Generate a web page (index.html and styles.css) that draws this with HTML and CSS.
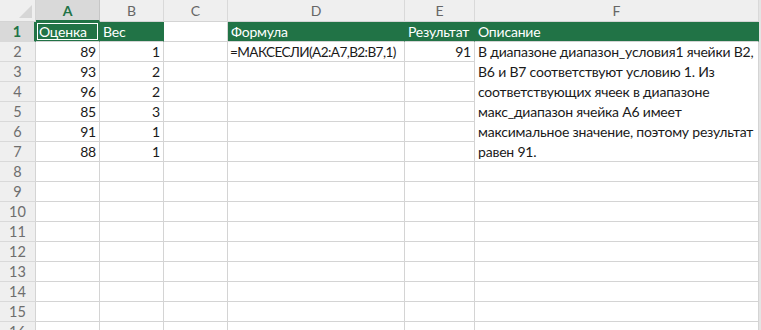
FILE: index.html
```html
<!DOCTYPE html>
<html>
<head>
<meta charset="utf-8">
<link rel="stylesheet" href="styles.css">
</head>
<body>
<div class="sheet">
  <div class="corner"><span class="tri"></span></div>
  <div class="ch sel-ch">A</div>
  <div class="ch">B</div>
  <div class="ch">C</div>
  <div class="ch">D</div>
  <div class="ch">E</div>
  <div class="ch">F</div>
  <div class="edge"></div>

  <div class="rh sel-rh">1</div>
  <div class="c g sel">Оценка</div>
  <div class="c g">Вес</div>
  <div class="c"></div>
  <div class="c g">Формула</div>
  <div class="c g">Результат</div>
  <div class="c g">Описание</div>
  <div class="edge"></div>

  <div class="rh">2</div>
  <div class="c num">89</div>
  <div class="c num">1</div>
  <div class="c"></div>
  <div class="c formula">=МАКСЕСЛИ(A2:A7,B2:B7,1)</div>
  <div class="c num">91</div>
  <div class="c merge">В диапазоне диапазон_условия1 ячейки B2,<br>B6 и B7 соответствуют условию 1. Из<br>соответствующих ячеек в диапазоне<br>макс_диапазон ячейка A6 имеет<br>максимальное значение, поэтому результат<br>равен 91.</div>
  <div class="edge"></div>

  <div class="rh">3</div>
  <div class="c num">93</div>
  <div class="c num">2</div>
  <div class="c"></div><div class="c"></div><div class="c"></div>
  <div class="edge"></div>

  <div class="rh">4</div>
  <div class="c num">96</div>
  <div class="c num">2</div>
  <div class="c"></div><div class="c"></div><div class="c"></div>
  <div class="edge"></div>

  <div class="rh">5</div>
  <div class="c num">85</div>
  <div class="c num">3</div>
  <div class="c"></div><div class="c"></div><div class="c"></div>
  <div class="edge"></div>

  <div class="rh">6</div>
  <div class="c num">91</div>
  <div class="c num">1</div>
  <div class="c"></div><div class="c"></div><div class="c"></div>
  <div class="edge"></div>

  <div class="rh">7</div>
  <div class="c num">88</div>
  <div class="c num">1</div>
  <div class="c"></div><div class="c"></div><div class="c"></div>
  <div class="edge"></div>

  <div class="rh">8</div>
  <div class="c"></div><div class="c"></div><div class="c"></div><div class="c"></div><div class="c"></div><div class="c"></div>
  <div class="edge"></div>
  <div class="rh">9</div>
  <div class="c"></div><div class="c"></div><div class="c"></div><div class="c"></div><div class="c"></div><div class="c"></div>
  <div class="edge"></div>
  <div class="rh">10</div>
  <div class="c"></div><div class="c"></div><div class="c"></div><div class="c"></div><div class="c"></div><div class="c"></div>
  <div class="edge"></div>
  <div class="rh">11</div>
  <div class="c"></div><div class="c"></div><div class="c"></div><div class="c"></div><div class="c"></div><div class="c"></div>
  <div class="edge"></div>
  <div class="rh">12</div>
  <div class="c"></div><div class="c"></div><div class="c"></div><div class="c"></div><div class="c"></div><div class="c"></div>
  <div class="edge"></div>
  <div class="rh">13</div>
  <div class="c"></div><div class="c"></div><div class="c"></div><div class="c"></div><div class="c"></div><div class="c"></div>
  <div class="edge"></div>
  <div class="rh">14</div>
  <div class="c"></div><div class="c"></div><div class="c"></div><div class="c"></div><div class="c"></div><div class="c"></div>
  <div class="edge"></div>
  <div class="rh">15</div>
  <div class="c"></div><div class="c"></div><div class="c"></div><div class="c"></div><div class="c"></div><div class="c"></div>
  <div class="edge"></div>
  <div class="rh">16</div>
  <div class="c"></div><div class="c"></div><div class="c"></div><div class="c"></div><div class="c"></div><div class="c"></div>
  <div class="edge"></div>
</div>
</body>
</html>
```

FILE: styles.css
```css
html, body {
  margin: 0;
  padding: 0;
  background: #ffffff;
  overflow: hidden;
}

.sheet {
  display: grid;
  grid-template-columns: 36px 64px 64px 64px 177px 70px 284px 2px;
  grid-template-rows: 22px;
  grid-auto-rows: 20px;
  font-family: Lato, "Liberation Sans", sans-serif;
  font-size: 14px;
  letter-spacing: -0.2px;
  color: #1a1a1a;
  width: 761px;
}

.corner {
  background: #efefef;
  border-right: 1px solid #d4d4d4;
  border-bottom: 1px solid #d4d4d4;
  box-sizing: border-box;
  position: relative;
}

.tri {
  position: absolute;
  right: 3px;
  bottom: 3px;
  width: 0;
  height: 0;
  border-left: 13px solid transparent;
  border-bottom: 13px solid #d6d6d6;
}

.ch {
  background: #efefef;
  color: #666666;
  text-align: center;
  line-height: 22px;
  border-right: 1px solid #d9d9d9;
  border-bottom: 1px solid #d4d4d4;
  box-sizing: border-box;
  font-size: 14px;
  letter-spacing: 0;
}

.sel-ch {
  background: #d9d9d9;
  color: #217346;
  font-weight: 700;
  border-bottom: 2px solid #217346;
  border-right: 1px solid #c6c6c6;
}

.edge {
  background: #e4e4e4;
}

.rh {
  background: #efefef;
  color: #6e6e6e;
  text-align: center;
  line-height: 20px;
  border-right: 1px solid #d4d4d4;
  border-bottom: 1px solid #d9d9d9;
  box-sizing: border-box;
  font-size: 14.5px;
  letter-spacing: 0;
}

.sel-rh {
  background: #d9d9d9;
  color: #217346;
  font-weight: 700;
  border-right: 2px solid #217346;
}

.c {
  border-right: 1px solid #d4d4d4;
  border-bottom: 1px solid #d4d4d4;
  box-sizing: border-box;
  line-height: 20px;
  padding: 0 3px;
  white-space: nowrap;
  overflow: hidden;
}

.g {
  background: #217346;
  color: #ffffff;
  border-right-color: #217346;
  border-bottom-color: #d4d4d4;
}

.sel {
  box-shadow: inset 0 0 0 1px #217346, inset 0 0 0 2px #ffffff;
  border-right-color: #217346;
}

.num {
  text-align: right;
}

.formula {
  font-size: 13.6px;
  letter-spacing: -0.6px;
  padding-left: 2px;
}

.merge {
  grid-row: span 6;
  white-space: nowrap;
  line-height: 20px;
}
```
